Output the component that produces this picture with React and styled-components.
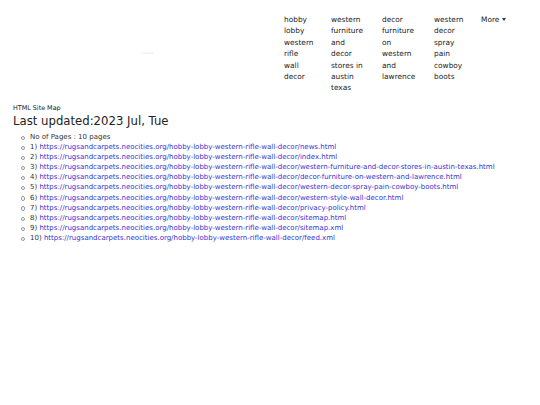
import React from 'react'
import styled, {createGlobalStyle} from 'styled-components'

const base = 'https://rugsandcarpets.neocities.org/hobby-lobby-western-rifle-wall-decor/'
const pages = [
    'news.html',
    'index.html',
    'western-furniture-and-decor-stores-in-austin-texas.html',
    'decor-furniture-on-western-and-lawrence.html',
    'western-decor-spray-pain-cowboy-boots.html',
    'western-style-wall-decor.html',
    'privacy-policy.html',
    'sitemap.html',
    'sitemap.xml',
    'feed.xml',
]
// the menu wraps narrow, keep the lines as the page shows them
const navItems = [
    {lines: ['hobby', 'lobby', 'western', 'rifle', 'wall', 'decor'], width: 47},
    {lines: ['western', 'furniture', 'and', 'decor', 'stores in', 'austin', 'texas'], width: 51},
    {lines: ['decor', 'furniture', 'on', 'western', 'and', 'lawrence'], width: 52},
    {lines: ['western', 'decor', 'spray', 'pain', 'cowboy', 'boots'], width: 47},
]

export default function App(){
    return (
        <>
        <GlobalStyle />
        <Navbar>
            <Brand>sitemap</Brand>
            <NavList>
                {navItems.map(item => (
                    <NavItem key={item.lines.join(' ')} $width={item.width}>
                        {item.lines.map(l => <NavLine key={l}>{l}</NavLine>)}
                    </NavItem>
                ))}
                <NavItem $width={40}>More <Caret /></NavItem>
            </NavList>
        </Navbar>
        <Main>
            <Small>HTML Site Map</Small>
            <Title>Last updated:2023 Jul, Tue</Title>
            <PageList>
                <Row>No of Pages : 10 pages</Row>
                {pages.map((p, i) => (
                    <Row key={p}>{i + 1}) <Link href={base + p}>{base + p}</Link></Row>
                ))}
            </PageList>
        </Main>
        </>
    )
}
const GlobalStyle = createGlobalStyle`
    body {
        margin: 0;
        background: #fff;
        color: #222;
        font-family: 'DejaVu Sans', Verdana, sans-serif;
    }
`
const Navbar = styled.nav`
    display: flex;
    align-items: flex-start;
    height: 97px;
    padding-top: 14px;
    box-sizing: border-box;
`
const Brand = styled.span`
    width: 284px;
    padding: 37px 0 0 141px;
    box-sizing: border-box;
    font-size: 3px;
    color: #e6e6e6;
`
const NavList = styled.ul`
    display: flex;
    list-style: none;
    margin: 0;
    padding: 0;
`
const NavItem = styled.li`
    width: ${p => p.$width}px;
    font-size: 7.4px;
    line-height: 11.4px;
    color: #222;
`
const NavLine = styled.div`
    white-space: nowrap;
`
const Caret = styled.span`
    display: inline-block;
    vertical-align: 1px;
    border-top: 3px solid #333;
    border-left: 2.5px solid transparent;
    border-right: 2.5px solid transparent;
`
const Main = styled.main`
    padding: 7px 13px;
`
const Small = styled.div`
    font-size: 6.4px;
    line-height: 8px;
    margin-bottom: 2px;
`
const Title = styled.h1`
    margin: 0 0 3px;
    font-size: 11.7px;
    font-weight: 400;
    line-height: 15px;
`
const PageList = styled.ul`
    list-style: none;
    margin: 0;
    padding-left: 17px;
    font-size: 7px;
    line-height: 10.1px;
    color: #333;
`
const Row = styled.li`
    position: relative;
    &::before {
        content: '';
        position: absolute;
        left: -9px;
        top: 3.8px;
        width: 2.2px;
        height: 2.2px;
        border: 0.6px solid #999;
        border-radius: 50%;
    }
`
const Link = styled.a`
    color: #3333d4;
    text-decoration: none;
`
